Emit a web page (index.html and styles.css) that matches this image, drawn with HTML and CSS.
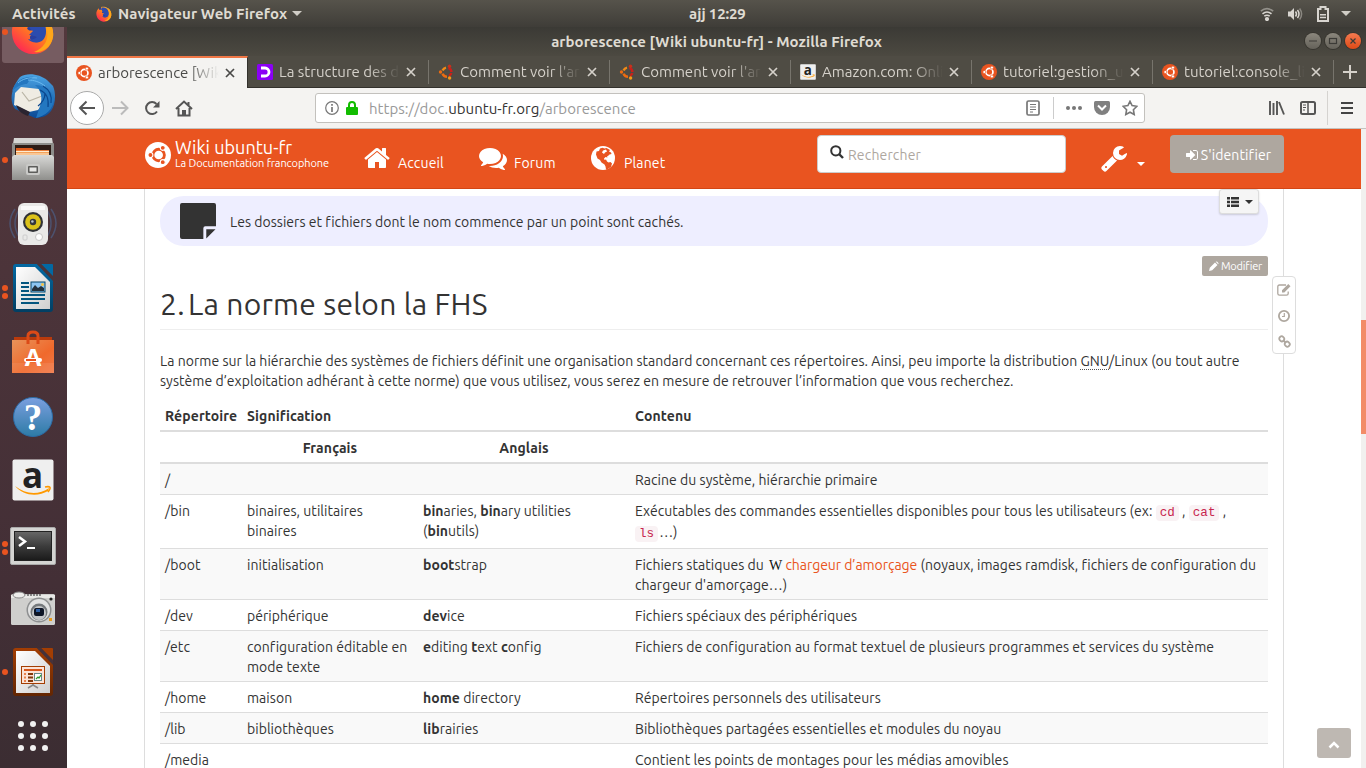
FILE: index.html
```html
<!DOCTYPE html>
<html lang="fr">
<head>
<meta charset="utf-8">
<title>arborescence [Wiki ubuntu-fr]</title>
<link rel="stylesheet" href="styles.css">
</head>
<body>
<svg class="sprite" aria-hidden="true">
  <defs>
    <linearGradient id="gFox" x1="1" y1="0" x2="0.2" y2="1"><stop offset="0" stop-color="#ffcb2e"/><stop offset=".45" stop-color="#ff8a16"/><stop offset="1" stop-color="#ff1f5a"/></linearGradient>
    <linearGradient id="gBird" x1="0" y1="0" x2="0" y2="1"><stop offset="0" stop-color="#4aa3e4"/><stop offset="1" stop-color="#0b4a96"/></linearGradient>
    <linearGradient id="gSilver" x1="0" y1="0" x2="0" y2="1"><stop offset="0" stop-color="#d9d9d7"/><stop offset="1" stop-color="#8f8f8c"/></linearGradient>
    <linearGradient id="gWhite" x1="0" y1="0" x2="1" y2="1"><stop offset="0" stop-color="#fff"/><stop offset="1" stop-color="#cfcfcf"/></linearGradient>
    <linearGradient id="gBlue" x1="0" y1="0" x2="0" y2="1"><stop offset="0" stop-color="#0369a3"/><stop offset="1" stop-color="#023f63"/></linearGradient>
    <linearGradient id="gBrown" x1="0" y1="0" x2="0" y2="1"><stop offset="0" stop-color="#a33e03"/><stop offset="1" stop-color="#632602"/></linearGradient>
    <linearGradient id="gBag" x1="0" y1="0" x2="1" y2="1"><stop offset="0" stop-color="#e8935a"/><stop offset=".6" stop-color="#f0692c"/><stop offset="1" stop-color="#f07a4a"/></linearGradient>
    <linearGradient id="gHelp" x1="0" y1="0" x2="0" y2="1"><stop offset="0" stop-color="#7b9fe0"/><stop offset="1" stop-color="#2d7ba6"/></linearGradient>
    <linearGradient id="gTerm" x1="0" y1="0" x2="0" y2="1"><stop offset="0" stop-color="#666"/><stop offset=".5" stop-color="#3c3c3c"/><stop offset="1" stop-color="#1b1b1b"/></linearGradient>
    <symbol id="firefox" viewBox="0 0 44 44">
      <circle cx="22" cy="20" r="18" fill="#2a3f9e"/>
      <path d="M14 3c5-2 13-1 18 3 8 5 11 13 10 20C40 37 32 43 22 43 11 43 2 35 1 23 0 15 4 9 8 6l1 5c3-1 5-1 7 0l5 2-5 4c1 3 4 3 6 2l2 2c-3 3-7 4-4 8 3 3 8 3 12-1 3-4 2-9 0-12-3-4-9-8-18-7Z" fill="url(#gFox)"/>
      <path d="M15 5c8-3 17 2 19 9 2 6 1 12-2 15-5 4-12 3-15-1 4 1 7 0 9-2-3-1-5-2-8-2l4-4c-4-2-7-9-7-15Z" fill="#2c4cae"/>
      <path d="M32 5c8 5 11 13 10 21C40 37 31 42 23 41 34 37 38 28 36 18Z" fill="#ffa61a"/>
    </symbol>
    <symbol id="ubuntu" viewBox="0 0 24 24">
      <circle cx="12" cy="12" r="12" fill="currentColor"/>
      <g class="cof"><circle class="ring" cx="12.600" cy="12" r="5.300" fill="none" stroke-width="2.600"/><circle cx="5" cy="12" r="2.300"/><circle cx="16.400" cy="5.400" r="2.300"/><circle cx="16.400" cy="18.600" r="2.300"/></g>
    </symbol>
    <symbol id="oldubuntu" viewBox="0 0 16 16">
      <path d="M4.600 6.400A4.700 4.700 0 0 1 8 3.600" fill="none" stroke="#f18a16" stroke-width="2.500"/>
      <path d="M10.500 3.800A4.700 4.700 0 0 1 13.400 8M13.300 9A4.700 4.700 0 0 1 11 12" fill="none" stroke="#c8201b" stroke-width="2.500"/>
      <path d="M9 12.800A4.700 4.700 0 0 1 4.600 9.600" fill="none" stroke="#ec6c11" stroke-width="2.500"/>
      <circle cx="2.500" cy="8" r="1.700" fill="#ec6c11"/><circle cx="11.500" cy="2.200" r="1.700" fill="#c8301b"/><circle cx="11.600" cy="14" r="1.700" fill="#f39a16"/>
    </symbol>
    <symbol id="close" viewBox="0 0 10 10"><path d="M1 1l8 8M9 1l-8 8" stroke="currentColor" stroke-width="1.700" fill="none"/></symbol>
    <symbol id="amazon" viewBox="0 0 42 42">
      <rect x=".5" y=".5" width="41" height="41" rx="2" fill="#efefef"/>
      <text x="20.500" y="28.500" class="az" text-anchor="middle">a</text>
      <path d="M3 27c11 9 24 9 34 2l-1 3C26 38 11 37 3 27Z" fill="#f90"/><path d="M33 28c5-1 7 0 3 5" fill="none" stroke="#f90" stroke-width="1.600"/>
    </symbol>
  </defs>
</svg>

<header class="topbar">
  <span class="t-act">Activités</span>
  <svg class="t-fox"><use href="#firefox"/></svg>
  <span class="t-app">Navigateur Web Firefox</span>
  <i class="tri"></i>
  <span class="t-clock">ajj 12:29</span>
  <div class="t-tray">
    <svg width="14" height="14" viewBox="0 0 14 14" fill="none" stroke="#d8d5d0" stroke-width="1.600"><path d="M.8 4.200q6.200-5 12.400 0" opacity=".5"/><path d="M2.500 6.800q4.500-3.500 9 0M4.300 9.200q2.700-2 5.400 0"/><circle cx="7" cy="12" r="1.300" fill="#d8d5d0"/></svg>
    <svg width="16" height="14" viewBox="0 0 16 14"><path d="M1 4.500h2.500L7 1v12L3.500 9.500H1Z" fill="#d8d5d0"/><path d="M8.500 4.500q2 2.500 0 5M10.500 3q3 4 0 8" stroke="#d8d5d0" stroke-width="1.500" fill="none"/><path d="M12.600 1.500q4 5.500 0 11" stroke="#8a8780" stroke-width="1.500" fill="none"/></svg>
    <svg class="bat" width="12" height="16" viewBox="0 0 12 16"><path d="M1 3h2.500V1h5v2H11v12H1Z" fill="none" stroke="#d8d5d0" stroke-width="2"/><path d="M3 8.700h6M3 11.500h6" stroke="#d8d5d0" stroke-width="1.500"/></svg>
    <i class="tri"></i>
  </div>
</header>

<div class="desktop">
  <nav class="dock">
    <div class="dock-list">
      <div class="app on"><i class="dots one"></i><svg width="44" height="44"><use href="#firefox"/></svg></div>
      <div class="app"><svg width="46" height="46" viewBox="0 0 46 46">
        <path d="M10 4C17-1 30 1 37 7l6 6c3 7 3 18-2 25-4 5-9 7-16 7L5 36C-1 28 1 15 10 4Z" fill="url(#gBird)"/>
        <path d="M5 20 11 14 29 16 37 26 28 37 19 39 4 32Z" fill="#efece3"/>
        <path d="M12 19l7 9 13-5" fill="none" stroke="#b9b4a5" stroke-width="1.200"/>
        <path d="M6 32l14 7-2 4C12 41 8 38 6 32Z" fill="#2a2430"/>
        <path d="M2 18C5 8 14 3 24 4c-4 2-5 4-7 7-5 0-9 2-15 7ZM25 12c6 5 8 13 5 21l-4 12c10-2 17-9 18-19-2-8-9-14-19-14Z" fill="#2377c0"/>
        <path d="M30 17c7 3 9 9 8 17M33 13c7 4 9 10 8 17M28 33c4-3 7-8 7-13" stroke="#0b478e" stroke-width="1.200" fill="none"/><path d="M8 10c4-4 11-6 19-5M18 7c6 0 12 2 17 6" stroke="#6bbaf0" fill="none"/></svg></div>
      <div class="app"><i class="dots one"></i><svg width="44" height="46" viewBox="0 0 44 46">
        <path d="M3 1h38l1 6H2Z" fill="#d5d5d3"/><rect x="1" y="6" width="42" height="37" rx="1" fill="#8e8e8b"/><rect x="4" y="8" width="36" height="12" fill="#2d1c16"/>
        <path d="M5 11h16l2 2h15v7H5Z" fill="#de5a1c"/><path d="M5 13.500h33v6H5Z" fill="#f4a25a"/><path d="M5 14.500h33M5 17h33" stroke="#fdebd0"/>
        <path d="M3 18h38l2 2v23H1V20Z" fill="url(#gSilver)"/><rect x="15" y="27" width="14" height="11" rx="2" fill="#c9c9c7"/><rect x="17" y="29" width="10" height="7" rx="1" fill="#5d5d5b"/><rect x="18.500" y="30.500" width="7" height="4" fill="#e6e6e4"/></svg></div>
      <div class="app"><svg width="50" height="46" viewBox="0 0 50 46" fill="none">
        <path d="M7 8q-10 14 0 29M11 9q-8 13 0 27M43 8q10 14 0 29M39 9q8 13 0 27" stroke="#4d6591" stroke-width="1.500" opacity=".6"/>
        <rect x="10" y="2" width="30" height="42" rx="6" fill="#e9e9e8"/><path d="M13 5h24v4H13Z" fill="#f9f9f9"/>
        <circle cx="25" cy="21" r="10" fill="#303236"/><circle cx="25" cy="21" r="7.800" fill="#dbc21a"/><circle cx="25" cy="21" r="3.200" fill="#35373c"/><circle cx="24.400" cy="20.500" r="1.300" fill="#b9c3cc"/>
        <circle cx="31" cy="36" r="3.500" fill="#fff" stroke="#c8c8c8"/><rect x="15" y="34" width="4" height="5" rx="1" stroke="#ccc"/></svg></div>
      <div class="app"><i class="dots"></i><svg width="40" height="48" viewBox="0 0 40 48">
        <path d="M3 0h21l16 16v29a3 3 0 0 1-3 3H3a3 3 0 0 1-3-3V3a3 3 0 0 1 3-3Z" fill="url(#gBlue)"/><path d="M28 0h11a1 1 0 0 1 1 1v12Z" fill="#0369a3"/><path d="M24 0h4l12 12v5Z" fill="#4b3439"/>
        <path d="M3 3h19l15 15v27H3Z" fill="url(#gWhite)"/>
        <path d="M8 19h8M8 23h8M8 27h8M8 31h24M8 35h24M8 39h18" stroke="#05567f" stroke-width="2"/>
        <rect x="18" y="18" width="14" height="10" fill="#8cc5f1" stroke="#05466b"/><path d="M19 27v-2l3-4 3 3 3-2 3 2v3Z" fill="#24313b"/><circle cx="29.500" cy="20.500" r="1.500" fill="#f6c244"/></svg></div>
      <div class="app"><svg width="42" height="46" viewBox="0 0 42 46">
        <path d="M2 8h38v4H2Z" fill="#b93a0c"/><path d="M0 11h42v33H0Z" fill="url(#gBag)"/><path d="M0 34h42v10H0Z" fill="#fff" opacity=".08"/>
        <path d="M16 15V7q0-4 5-4t5 4v8" fill="none" stroke="#dc4a17" stroke-width="3"/>
        <text x="21" y="37" text-anchor="middle" class="sw">A</text><rect x="12" y="29" width="18" height="4" rx="2" fill="#fff"/><rect x="14" y="30" width="10" height="2" fill="#e95420"/></svg></div>
      <div class="app help"><svg width="42" height="42" viewBox="0 0 42 42"><circle cx="21" cy="21" r="19.500" fill="url(#gHelp)" stroke="#2b6ba5"/><text x="21" y="34" text-anchor="middle" class="qm">?</text></svg></div>
      <div class="app"><svg width="42" height="42"><use href="#amazon"/></svg></div>
      <div class="app term"><i class="dots"></i><svg width="46" height="38" viewBox="0 0 46 38"><rect x=".5" y=".5" width="45" height="37" rx="1.500" fill="#d4d4d2" stroke="#aaa"/><rect x="4" y="4" width="38" height="30" fill="#222"/><rect x="5" y="5" width="36" height="28" fill="url(#gTerm)"/><path d="M9 10l6 4.500-6 4.500" fill="none" stroke="#fff" stroke-width="2.500"/><path d="M17 21h8" stroke="#fff" stroke-width="2"/></svg></div>
      <div class="app"><svg width="46" height="36" viewBox="0 0 46 36">
        <rect x="1" y="4" width="44" height="31" rx="1.500" fill="#cfcfcd"/><path d="M1 5h44v3H1Z" fill="#e9e9e7"/><ellipse cx="9" cy="5" rx="6" ry="3" fill="#ededeb" stroke="#888"/><path d="M17 5h15" stroke="#666" stroke-width="1.500" stroke-dasharray="2 1"/>
        <circle cx="29" cy="20" r="12.500" fill="#8d8f90"/><circle cx="29" cy="20" r="11" fill="#e1e2e2"/><circle cx="29" cy="22" r="8.500" fill="#75797c"/><circle cx="29" cy="23" r="7" fill="#c3c5c7"/><rect x="24" y="18" width="10" height="8" rx="2" fill="#0d1526"/><path d="M26 19h4v3h-4Z" fill="#2d5fa3"/><circle cx="41" cy="9" r="1.600" fill="#222"/><rect x="39" y="28" width="3" height="3" fill="#eb9c1c"/></svg></div>
      <div class="app"><i class="dots one"></i><svg width="40" height="48" viewBox="0 0 40 48">
        <path d="M3 0h21l16 16v29a3 3 0 0 1-3 3H3a3 3 0 0 1-3-3V3a3 3 0 0 1 3-3Z" fill="url(#gBrown)"/><path d="M28 0h11a1 1 0 0 1 1 1v12Z" fill="#a33e03"/><path d="M24 0h4l12 12v5Z" fill="#46323a"/>
        <path d="M3 3h19l15 15v27H3Z" fill="url(#gWhite)"/>
        <rect x="8.500" y="18.500" width="23" height="17" fill="#fbe3d7" stroke="#a33e03"/><path d="M11 22h18" stroke="#d8571a" stroke-width="2"/><path d="M15 26h5M15 29.500h5M15 33h5" stroke="#84390c" stroke-width="2"/><path d="M11 26h2M11 29.500h2M11 33h2" stroke="#e9834e" stroke-width="2"/><rect x="21.500" y="25.500" width="7" height="7" fill="#fff" stroke="#688"/><path d="M23 31l2-2 1 1 2-3" stroke="#2d9a2d" stroke-width="1.200" fill="none"/><path d="M20 36v1l-5 3M20 37l5 3" stroke="#888" stroke-width="1.600" fill="none"/></svg></div>
      <div class="app"><svg width="30" height="30" viewBox="0 0 30 30" fill="#f1f1f1"><circle cx="3" cy="3" r="3"/><circle cx="15" cy="3" r="3"/><circle cx="27" cy="3" r="3"/><circle cx="3" cy="15" r="3"/><circle cx="15" cy="15" r="3"/><circle cx="27" cy="15" r="3"/><circle cx="3" cy="27" r="3"/><circle cx="15" cy="27" r="3"/><circle cx="27" cy="27" r="3"/></svg></div>
    </div>
  </nav>

  <section class="window">
    <div class="titlebar">
      <span class="title">arborescence [Wiki ubuntu-fr] - Mozilla Firefox</span>
      <div class="wbtns">
        <svg class="wb" viewBox="0 0 16 16"><path d="M4 8h8"/></svg>
        <svg class="wb" viewBox="0 0 16 16"><rect x="4.500" y="5.500" width="7" height="5"/></svg>
        <svg class="wb red" viewBox="0 0 16 16"><path d="M5.500 5.500l5 5M10.500 5.500l-5 5"/></svg>
      </div>
    </div>
    <div class="tabs">
      <div class="tab active"><svg class="fav orange"><use href="#ubuntu"/></svg><span>arborescence [Wik</span><svg class="x"><use href="#close"/></svg></div>
      <div class="tab"><svg class="fav" viewBox="0 0 16 16"><rect width="16" height="16" rx="1.500" fill="#8b00f5"/><path d="M4 4h4a4 4 0 0 1 0 8H4" fill="none" stroke="#fff" stroke-width="2.800"/></svg><span>La structure des d</span><svg class="x"><use href="#close"/></svg></div>
      <div class="tab"><svg class="fav"><use href="#oldubuntu"/></svg><span>Comment voir l'ar</span><svg class="x"><use href="#close"/></svg></div>
      <div class="tab"><svg class="fav"><use href="#oldubuntu"/></svg><span>Comment voir l'ar</span><svg class="x"><use href="#close"/></svg></div>
      <div class="tab"><svg class="fav"><use href="#amazon"/></svg><span>Amazon.com: Onli</span><svg class="x"><use href="#close"/></svg></div>
      <div class="tab"><svg class="fav orange"><use href="#ubuntu"/></svg><span>tutoriel:gestion_u</span><svg class="x"><use href="#close"/></svg></div>
      <div class="tab"><svg class="fav orange"><use href="#ubuntu"/></svg><span>tutoriel:console_li</span><svg class="x"><use href="#close"/></svg></div>
      <div class="plus"><svg width="14" height="14" viewBox="0 0 14 14"><path d="M7 0v14M0 7h14" stroke="#d5d1ca" stroke-width="2"/></svg></div>
    </div>
    <div class="toolbar">
      <span class="back"><svg width="18" height="16" viewBox="0 0 18 16"><path d="M17 8H2M8.500 1.500L2 8l6.500 6.500" fill="none" stroke="#555" stroke-width="2"/></svg></span>
      <svg class="fwd" width="17" height="16" viewBox="0 0 17 16"><path d="M0 8h15M9 1.500L15.500 8 9 14.500" fill="none" stroke="#bbb" stroke-width="2"/></svg>
      <svg class="rel" width="16" height="16" viewBox="0 0 16 16"><path d="M13 11.500A6 6 0 1 1 12.500 4" fill="none" stroke="#555" stroke-width="2"/><path d="M15.500 1v6.500H9Z" fill="#555"/></svg>
      <svg class="hom" width="18" height="17" viewBox="0 0 18 17"><path d="M1 9l8-7.500L17 9M3.500 8v7.500h11V8M13.500 5V2" fill="none" stroke="#555" stroke-width="2"/><path d="M7 10h4v5H7Z" fill="#555"/></svg>
      <div class="urlbar">
        <svg width="14" height="14" viewBox="0 0 14 14"><circle cx="7" cy="7" r="6.300" fill="none" stroke="#777" stroke-width="1.200"/><path d="M7 6v5M7 3v1.700" stroke="#777" stroke-width="1.700"/></svg>
        <svg class="lock" width="12" height="14" viewBox="0 0 12 14"><path d="M3 7V4q0-3 3-3t3 3v3" fill="none" stroke="#12bc00" stroke-width="2"/><rect y="6" width="12" height="8" rx="1" fill="#12bc00"/></svg>
        <span class="url">https://doc.<b>ubuntu-fr.org</b>/arborescence</span>
        <div class="uright">
          <svg width="14" height="16" viewBox="0 0 14 16"><rect x="1" y="1" width="12" height="14" rx="1.500" fill="none" stroke="#777" stroke-width="1.700"/><path d="M4 4.500h6M4 7h6M4 9.500h6M4 12h3" stroke="#777"/></svg>
          <i class="vsep"></i>
          <svg class="more" width="16" height="4" viewBox="0 0 16 4" fill="#777"><circle cx="2" cy="2" r="2"/><circle cx="8" cy="2" r="2"/><circle cx="14" cy="2" r="2"/></svg>
          <svg class="pocket" width="16" height="14" viewBox="0 0 16 14"><path d="M1.500 0h13Q16 0 16 1.500V6a8 8 0 0 1-16 0V1.500Q0 0 1.500 0Z" fill="#808080"/><path d="M4 4.500l4 4 4-4" fill="none" stroke="#fff" stroke-width="2"/></svg>
          <svg width="16" height="16" viewBox="0 0 16 16"><path d="M8 1.300l2.100 4.300 4.700.7-3.400 3.400.8 4.800L8 12.200l-4.200 2.300.8-4.800L1.200 6.300l4.700-.7Z" fill="none" stroke="#777" stroke-width="1.600"/></svg>
        </div>
      </div>
      <svg class="lib" width="16" height="14" viewBox="0 0 16 14"><path d="M1 0v14M4.500 2v12M8 0v14M10 1l5 12.500" fill="none" stroke="#555" stroke-width="1.900"/></svg>
      <svg class="side" width="16" height="14" viewBox="0 0 16 14"><rect x="1" y="1" width="14" height="12" rx="1.500" fill="none" stroke="#555" stroke-width="2"/><path d="M8 1v12" stroke="#555" stroke-width="1.500"/><path d="M3 4h3M3 6.500h3M3 9h2" stroke="#555"/></svg>
      <div class="burger"><svg width="12" height="12" viewBox="0 0 12 12"><path d="M0 1h12M0 6h12M0 11h12" stroke="#444" stroke-width="1.800"/></svg></div>
    </div>

    <div class="viewport">
      <div class="page">
        <header class="site">
          <a class="brand"><svg class="blogo"><use href="#ubuntu"/></svg><span class="bt"><span class="b1">Wiki ubuntu-fr</span><span class="b2">La Documentation francophone</span></span></a>
          <a class="nav n1"><svg width="26" height="28" viewBox="0 0 1664 1792"><path fill="#fff" d="M1408 992v480q0 26-19 45t-45 19h-384v-384h-256v384h-384q-26 0-45-19t-19-45v-480q0-1 .5-3t.5-3l575-474 575 474q1 2 1 6zm223-69l-62 74q-8 9-21 11h-3q-13 0-21-7l-692-577-692 577q-12 8-24 7-13-2-21-11l-62-74q-8-10-7-23.500t11-21.500l719-599q32-26 76-26t76 26l244 204v-195q0-14 9-23t23-9h192q14 0 23 9t9 23v408l219 182q10 8 11 21.500t-7 23.500z"/></svg><span>Accueil</span></a>
          <a class="nav n2"><svg width="28" height="28" viewBox="0 0 1792 1792"><path fill="#fff" d="M1408 768q0 139-94 257t-256.500 186.500-353.500 68.500q-86 0-176-16-124 88-278 128-36 9-86 16h-3q-11 0-20.500-8t-11.500-21q-1-3-1-6.500t.5-6.500 2-6l2.500-5 3.500-5.500 4-5 4.500-5 4-4.500q5-6 23-25t26-29.500 22.500-29 25-38.500 20.500-44q-124-72-195-177t-71-224q0-139 94-257t256.500-186.500 353.500-68.500 353.500 68.500 256.500 186.500 94 257zm384 256q0 120-71 224.500t-195 176.500q10 24 20.500 44t25 38.500 22.500 29 26 29.500 23 25q1 1 4 4.500t4.500 5 4 5 3.500 5.500l2.500 5 2 6 .5 6.500-1 6.500q-3 14-13 22t-22 7q-50-7-86-16-154-40-278-128-90 16-176 16-271 0-472-132 58 4 88 4 161 0 309-45t264-129q125-92 192-212t67-254q0-77-23-152 129 71 204 178t75 230z"/></svg><span>Forum</span></a>
          <a class="nav n3"><svg width="24" height="28" viewBox="0 0 24 28"><circle cx="12" cy="14" r="12" fill="#fff"/><path d="M9 4.500l2.500-.7 2 .8 2-.6 3.500 2-1 1.500 2 1 .5 1.500-2 .5-1 1-1.500 1 .5 1-2-.5-1.500 1.500.5 1.500 1.500-.5 1 2 1.500 1 2-.5 1.500 1.500-1 3.500-2.500 1.500-1 1.500-1.500-.5-.5-3-1-2-3-2-1.500-2.500-2.500-1.500L5 10.500l.5-3L8 7Z" fill="#e95420"/><path d="M12 6.500l3-1 1 2-2 1-1 1.500-2-1.500Z" fill="#fff"/></svg><span>Planet</span></a>
          <div class="search"><svg width="14" height="14" viewBox="0 0 14 14"><circle cx="5.800" cy="5.800" r="4.600" fill="none" stroke="#333" stroke-width="2"/><path d="M9 9l4 4" stroke="#333" stroke-width="2.400"/></svg><span>Rechercher</span></div>
          <a class="tools"><svg width="28" height="28" viewBox="0 0 1792 1792"><path fill="#fff" d="M448 1472q0-26-19-45t-45-19-45 19-19 45 19 45 45 19 45-19 19-45zm644-420l-682 682q-37 37-90 37-52 0-91-37l-106-108q-38-36-38-90 0-53 38-91l681-681q39 98 114.500 173.500t173.500 114.500zm634-435q0 39-23 106-47 134-164.500 217.500t-258.500 83.500q-185 0-316.500-131.500t-131.500-316.500 131.500-316.500 316.500-131.500q58 0 121.500 16.500t107.500 46.500q16 11 16 28t-16 28l-293 169v224l193 107q5-3 79-48.500t135.500-81 70.500-35.500q15 0 23.500 10t8.500 25z"/></svg><i class="caret w"></i></a>
          <a class="login"><svg width="14" height="14" viewBox="0 0 1536 1792"><path fill="#fff" d="M1184 896q0 26-19 45l-544 544q-19 19-45 19t-45-19-19-45v-288h-448q-26 0-45-19t-19-45v-384q0-26 19-45t45-19h448v-288q0-26 19-45t45-19 45 19l544 544q19 19 19 45zm352-352v704q0 119-84.500 203.500t-203.500 84.500h-320q-13 0-22.500-9.500t-9.500-22.500q0-4-1-20t-.5-26.500 3-23.500 10-19.500 20.500-6.500h320q66 0 113-47t47-113v-704q0-66-47-113t-113-47h-312l-11.500-1-11.500-3-8-5.500-7-9-2-13.500q0-4-1-20t-.5-26.500 3-23.500 10-19.500 20.500-6.500h320q119 0 203.500 84.500t84.500 203.500z"/></svg><span>S'identifier</span></a>
        </header>

        <main class="wiki">
          <div class="note"><svg width="36" height="36" viewBox="0 0 37 37"><path d="M2 0h33q2 0 2 2v22H26q-2 0-2 2v11H2q-2 0-2-2V2Q0 0 2 0ZM27 27h9.500L27 36.500Z" fill="#333"/></svg><span>Les dossiers et fichiers dont le nom commence par un point sont cachés.</span></div>
          <div class="toc"><svg width="12" height="10" viewBox="0 0 12 10" fill="#333"><path d="M0 0h3v2.600H0ZM4 0h8v2.600H4ZM0 3.700h3v2.600H0ZM4 3.700h8v2.600H4ZM0 7.400h3V10H0ZM4 7.400h8V10H4Z"/></svg><i class="caret"></i></div>
          <div class="editrow"><a class="edit"><svg width="10" height="10" viewBox="0 0 10 10"><path d="M0 10l.8-3.200L6 1.500l2.500 2.500-5.300 5.200ZM6.700.8Q7.500 0 8.300.8l.9.900q.8.800 0 1.600Z" fill="#fff"/></svg><span>Modifier</span></a></div>
          <h2><span class="num">2.</span> La norme selon la FHS</h2>
          <p>La norme sur la hiérarchie des systèmes de fichiers définit une organisation standard concernant ces répertoires. Ainsi, peu importe la distribution <abbr>GNU</abbr>/Linux (ou tout autre<br>système d’exploitation adhérant à cette norme) que vous utilisez, vous serez en mesure de retrouver l’information que vous recherchez.</p>
          <table>
            <colgroup><col class="c1"><col class="c2"><col class="c3"><col></colgroup>
            <thead>
              <tr><th class="l">Répertoire</th><th class="l" colspan="2">Signification</th><th class="l">Contenu</th></tr>
              <tr><th></th><th>Français</th><th>Anglais</th><th></th></tr>
            </thead>
            <tbody>
              <tr class="first"><td>/</td><td></td><td></td><td>Racine du système, hiérarchie primaire</td></tr>
              <tr class="tall"><td>/bin</td><td>binaires, utilitaires<br>binaires</td><td><b>bin</b>aries, <b>bin</b>ary utilities<br>(<b>bin</b>utils)</td><td>Exécutables des commandes essentielles disponibles pour tous les utilisateurs (ex: <code>cd</code> , <code>cat</code> ,<br><code class="low">ls</code><span class="low dots3">…)</span></td></tr>
              <tr><td>/boot</td><td>initialisation</td><td><b>boot</b>strap</td><td>Fichiers statiques du <span class="wp">W</span><a class="lnk">chargeur d’amorçage</a> (noyaux, images ramdisk, fichiers de configuration du<br>chargeur d'amorçage…)</td></tr>
              <tr><td>/dev</td><td>périphérique</td><td><b>dev</b>ice</td><td>Fichiers spéciaux des périphériques</td></tr>
              <tr><td>/etc</td><td>configuration éditable en<br>mode texte</td><td><b>e</b>diting <b>t</b>ext <b>c</b>onfig</td><td>Fichiers de configuration au format textuel de plusieurs programmes et services du système</td></tr>
              <tr><td>/home</td><td>maison</td><td><b>home</b> directory</td><td>Répertoires personnels des utilisateurs</td></tr>
              <tr><td>/lib</td><td>bibliothèques</td><td><b>lib</b>rairies</td><td>Bibliothèques partagées essentielles et modules du noyau</td></tr>
              <tr><td>/media</td><td></td><td></td><td>Contient les points de montages pour les médias amovibles</td></tr>
            </tbody>
          </table>
          <aside class="pagetools">
            <svg width="14" height="14" viewBox="0 0 14 14" fill="none" stroke="#aea79f" stroke-width="1.300"><path d="M9 2H2.500Q.8 2 .8 3.700v6.800q0 1.700 1.700 1.700h7q1.700 0 1.700-1.700V8.500"/><path d="M5 9.500V7.200L11.300 1l2.200 2.200L7.300 9.500Z" fill="#aea79f" stroke="none"/></svg>
            <svg width="12" height="12" viewBox="0 0 12 12" fill="none" stroke="#aea79f"><circle cx="6" cy="6" r="5.100" stroke-width="1.800"/><path d="M6.300 3v3.500H4" stroke-width="1.200"/></svg>
            <svg width="13" height="13" viewBox="0 0 13 13" fill="none" stroke="#aea79f" stroke-width="1.800"><rect x="1.300" y="1.500" width="5" height="4.600" rx="2" transform="rotate(45 3.800 3.800)"/><rect x="6.700" y="6.900" width="5" height="4.600" rx="2" transform="rotate(45 9.200 9.200)"/><path d="M5 5l3 3"/></svg>
          </aside>
        </main>
        <a class="totop"><svg width="12" height="8" viewBox="0 0 12 8"><path d="M1.500 6.500L6 2l4.500 4.500" fill="none" stroke="#fff" stroke-width="2.500"/></svg></a>
      </div>
      <div class="scroll"><i></i></div>
    </div>
  </section>
</div>
</body>
</html>
```
FILE: styles.css
```css
* { box-sizing: border-box; }
html, body { margin: 0; height: 768px; overflow: hidden; }
body { font-family: Ubuntu, "Noto Sans", "Open Sans", sans-serif; font-size: 14px; letter-spacing: 0.04px; color: #333; background: #fff; white-space: nowrap; }
svg { display: block; flex: none; }
.sprite { position: absolute; width: 0; height: 0; }
.az { font: bold 35px "Open Sans", sans-serif; letter-spacing: 0; fill: #222; }
.sw { font: bold 24px "Open Sans", sans-serif; letter-spacing: 0; fill: #fff; }
.qm { font: bold 37px "Liberation Serif", serif; letter-spacing: 0; fill: #fff; }

.topbar { position: relative; z-index: 2; height: 27px; display: flex; align-items: center; padding: 0 15px 0 12px; background: linear-gradient(#56534b, #3f3d38); color: #dfdbd2; font-weight: bold; font-size: 15px; }
.t-act { width: 84px; letter-spacing: 0.15px; }
.t-fox { width: 16px; height: 16px; }
.t-app { width: 168px; margin: 0 6px 0 6px; letter-spacing: 0.1px; }
.tri { width: 0; height: 0; border: 5px solid transparent; border-top-color: #d0cdc6; border-bottom: 0; }
.t-clock { margin-left: 387px; letter-spacing: -0.2px; padding-bottom: 1px; }
.t-tray { margin-left: auto; display: flex; align-items: center; gap: 13px; }
.bat { margin: 0 -1px 0 1px; }

.desktop { display: flex; height: 741px; }
.dock { width: 67px; background: linear-gradient(#53383d, #432f36 75%, #3b2d32); overflow: hidden; flex: none; }
.dock-list { margin-top: -27px; }
.app { position: relative; height: 64px; width: 66px; display: flex; align-items: center; justify-content: center; }
.app.on { width: 62px; height: 63px; margin: 0 2px 1px; background: #765c61; border-radius: 3px; padding-top: 2px; }
.app.help { padding-top: 2px; }
.term { padding-top: 3px; }
.dots { position: absolute; left: 2px; top: 29px; width: 6px; height: 6px; border-radius: 50%; background: #e95420; box-shadow: 0 8px #e95420; }
.dots.one { box-shadow: none; }
.app.on .dots { left: 0; }

.window { width: 1299px; display: flex; flex-direction: column; }
.titlebar { height: 29px; position: relative; display: flex; align-items: center; justify-content: center; background: linear-gradient(#3b3a35, #4c4941); color: #dfdbd2; font-weight: bold; font-size: 15px; padding-bottom: 1px; }
.wbtns { position: absolute; right: 5px; top: 6px; display: flex; gap: 4px; }
.wb { width: 16px; height: 16px; border-radius: 50%; background: linear-gradient(#8b877d, #65625a); box-shadow: 0 0 0 1px #37352f; fill: none; stroke: #3c3b37; stroke-width: 1.2; }
.wb.red { background: linear-gradient(#f47a50, #df4a16); }
.tabs { height: 32px; display: flex; background: #4f4c44; border-bottom: 1px solid #33312c; }
.tab { width: 181px; height: 31px; display: flex; align-items: center; padding: 0 13px 0 9px; position: relative; color: #d5d1ca; font-size: 15px; }
.tab::after { content: ""; position: absolute; right: 0; top: 4px; width: 1px; height: 24px; background: #77746c; }
.tab.active { background: #f4f3f1; color: #4a4a48; border-top: 2px solid #f07746; height: 32px; border-right: 1px solid #33312c; padding-right: 12px; padding-bottom: 1px; }
.tab.active::after { display: none; }
.fav { width: 16px; height: 16px; }
.tab span { margin-left: 6px; width: 121px; letter-spacing: 0; -webkit-mask-image: linear-gradient(90deg, #000 74%, transparent 100%); mask-image: linear-gradient(90deg, #000 74%, transparent 100%); }
.tab .x { width: 10px; height: 10px; margin-left: auto; }
.orange { color: #e95420; --mark: #fff; }
.cof { fill: var(--mark); }
.cof circle { stroke: currentColor; stroke-width: 1; }
.cof .ring { fill: none; stroke: var(--mark); stroke-width: 2.6; }
.plus { width: 32px; display: flex; align-items: center; justify-content: center; }

.toolbar { height: 41px; display: flex; align-items: center; background: #f4f3f1; border-bottom: 1px solid #c4c2be; flex: none; }
.back { width: 34px; height: 34px; margin-left: 3px; border: 1px solid #aaa; border-radius: 50%; background: #fff; display: flex; align-items: center; justify-content: center; }
.fwd { margin-left: 8px; }
.rel { margin-left: 15px; }
.hom { margin-left: 15px; }
.urlbar { margin-left: 122px; width: 830px; height: 30px; display: flex; align-items: center; background: #fff; border: 1px solid #c3c1bd; border-radius: 3px; padding: 0 6px 0 9px; }
.lock { margin-left: 7px; }
.url { margin-left: 11px; color: #999; font-size: 15px; }
.url b { font-weight: normal; color: #333; }
.uright { margin-left: auto; display: flex; align-items: center; }
.vsep { width: 1px; height: 22px; background: #ccc; margin: 0 12px 0 13px; }
.pocket { margin: 0 12px; }
.lib { margin-left: 124px; }
.side { margin-left: 15px; }
.burger { margin-left: 11px; padding-left: 13px; border-left: 1px solid #d5d3d0; height: 34px; display: flex; align-items: center; }

.viewport { display: flex; flex: 1; min-height: 0; }
.page { position: relative; width: 1294px; overflow: hidden; background: #fff; }
.scroll { width: 5px; background: #f1f0ef; padding-top: 191px; }
.scroll i { display: block; height: 114px; background: #f28c68; }

.site { height: 60px; background: #e95420; border-bottom: 1px solid #d34615; display: flex; align-items: flex-start; padding-left: 78px; color: #fff; }
.brand { display: flex; width: 219px; padding-top: 8px; }
.blogo { width: 26px; height: 26px; margin-top: 5px; color: #fff; --mark: #e95420; }
.bt { margin-left: 4px; display: flex; flex-direction: column; }
.b1 { font-size: 18px; line-height: 21px; }
.b2 { font-size: 11px; line-height: 12px; letter-spacing: -0.1px; position: relative; top: -1px; }
.nav { display: flex; padding-top: 15px; letter-spacing: 0.15px; }
.nav span { margin-left: 8px; line-height: 20px; padding-top: 9px; }
.n1 { width: 115px; }
.n2 { width: 112px; }
.n2 span { margin-left: 7px; }
.n3 { width: 226px; }
.n3 span { margin-left: 9px; }
.search { margin-top: 6px; width: 249px; height: 38px; background: #fff; border: 1px solid #ccc; border-radius: 4px; display: flex; padding: 9px 0 0 12px; }
.search span { margin-left: 4px; line-height: 20px; color: #aea79f; letter-spacing: 0.15px; }
.tools { display: flex; width: 104px; padding: 15px 0 0 34px; }
.caret { width: 0; height: 0; border: 4px solid transparent; border-top-color: #333; border-bottom: 0; }
.caret.w { border-top-color: #fff; margin: 18px 0 0 9px; }
.login { margin-top: 6px; width: 114px; height: 38px; background: #aea79f; border-radius: 4px; display: flex; align-items: center; justify-content: center; padding: 2px 0 0 2px; gap: 2px; letter-spacing: 0.1px; }

.wiki { position: relative; margin-left: 77px; width: 1140px; height: 600px; padding: 7px 15px 0; border: solid #ddd; border-width: 0 1px; line-height: 20px; }
.note { height: 50px; border-radius: 24px; background: #eef; display: flex; align-items: center; padding-left: 20px; }
.note span { margin-left: 14px; padding-top: 1px; letter-spacing: 0.03px; }
.toc { position: absolute; right: 24px; top: 0; width: 40px; height: 25px; background: #f5f5f5; border: 1px solid #ddd; border-radius: 3px; box-shadow: 0 1px 2px rgba(0,0,0,.15); display: flex; align-items: center; gap: 6px; padding-left: 7px; }
.editrow { display: flex; justify-content: flex-end; margin-top: 10px; }
.edit { width: 66px; height: 20px; border-radius: 2px; background: #aea79f; color: #fff; font-size: 11px; letter-spacing: -0.2px; display: flex; align-items: center; padding-left: 7px; gap: 2px; }
h2 { margin: 9px 0 20px; height: 45px; line-height: 38px; font-weight: normal; font-size: 30px; letter-spacing: 0.25px; border-bottom: 1px solid #eee; }
.num { margin-right: -4px; }
p { margin: 0 0 10px; padding-top: 1px; }
abbr { border-bottom: 1px dotted #555; text-decoration: none; }
table { width: 1108px; margin-top: -1px; border-collapse: separate; border-spacing: 0; table-layout: fixed; }
.c1 { width: 82px; } .c2 { width: 176px; } .c3 { width: 212px; }
th { height: 32px; padding: 5px 5px 4px; border-bottom: 2px solid #ddd; letter-spacing: 0.12px; }
th.l { text-align: left; }
td { padding: 6px 5px 4px; border-top: 1px solid #ddd; vertical-align: top; }
.first td { border-top: 0; }
.tall td { height: 54px; }
tbody tr:nth-child(odd) td { background: #f9f9f9; }
code { font: 12.6px "Liberation Mono", monospace; letter-spacing: 0; color: #c7254e; background: #f9f2f4; border-radius: 4px; padding: 1px 4px; }
.low { position: relative; top: 1px; }
.dots3 { margin-left: 1px; }
.wp { font: 14px "Liberation Serif", serif; color: #111; padding: 0 3px 0 2px; }
.lnk { color: #e95420; letter-spacing: -0.05px; }
.pagetools { position: absolute; right: -13px; top: 87px; width: 24px; height: 78px; background: #fff; border: 1px solid #ddd; border-radius: 4px; display: flex; flex-direction: column; align-items: center; padding-top: 6px; gap: 13px; }
.totop { position: absolute; left: 1250px; top: 599px; width: 34px; height: 30px; border-radius: 3px; background: #beb8b2; display: flex; align-items: center; justify-content: center; padding-top: 3px; }
```
